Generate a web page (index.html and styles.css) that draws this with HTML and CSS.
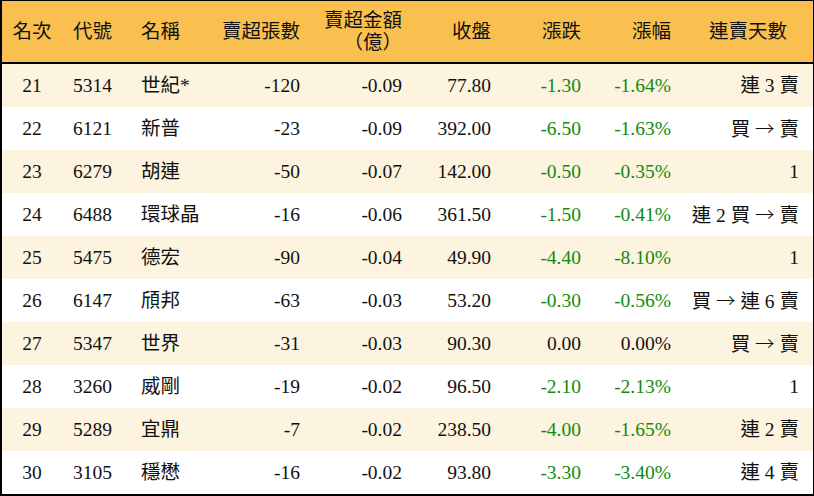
FILE: index.html
```html
<!DOCTYPE html>
<html lang="zh-Hant">
<head>
<meta charset="utf-8">
<title>賣超排行</title>
<link rel="stylesheet" href="styles.css">
</head>
<body>
<div class="frame">
<table class="rank">
<colgroup>
<col class="c1"><col class="c2"><col class="c3"><col class="c4"><col class="c5"><col class="c6"><col class="c7"><col class="c8"><col class="c9">
</colgroup>
<thead>
<tr>
<th class="ctr">名次</th>
<th class="lft">代號</th>
<th class="lft">名稱</th>
<th class="rgt">賣超張數</th>
<th class="rgt">賣超金額<br>（億）</th>
<th class="rgt">收盤</th>
<th class="rgt">漲跌</th>
<th class="rgt">漲幅</th>
<th class="rgt last">連賣天數</th>
</tr>
</thead>
<tbody>
<tr class="alt"><td class="ctr">21</td><td class="lft">5314</td><td class="lft">世紀*</td><td class="rgt">-120</td><td class="rgt">-0.09</td><td class="rgt">77.80</td><td class="rgt dn">-1.30</td><td class="rgt dn">-1.64%</td><td class="rgt last">連 3 賣</td></tr>
<tr><td class="ctr">22</td><td class="lft">6121</td><td class="lft">新普</td><td class="rgt">-23</td><td class="rgt">-0.09</td><td class="rgt">392.00</td><td class="rgt dn">-6.50</td><td class="rgt dn">-1.63%</td><td class="rgt last">買 <span class="arw">→</span> 賣</td></tr>
<tr class="alt"><td class="ctr">23</td><td class="lft">6279</td><td class="lft">胡連</td><td class="rgt">-50</td><td class="rgt">-0.07</td><td class="rgt">142.00</td><td class="rgt dn">-0.50</td><td class="rgt dn">-0.35%</td><td class="rgt last">1</td></tr>
<tr><td class="ctr">24</td><td class="lft">6488</td><td class="lft">環球晶</td><td class="rgt">-16</td><td class="rgt">-0.06</td><td class="rgt">361.50</td><td class="rgt dn">-1.50</td><td class="rgt dn">-0.41%</td><td class="rgt last">連 2 買 <span class="arw">→</span> 賣</td></tr>
<tr class="alt"><td class="ctr">25</td><td class="lft">5475</td><td class="lft">德宏</td><td class="rgt">-90</td><td class="rgt">-0.04</td><td class="rgt">49.90</td><td class="rgt dn">-4.40</td><td class="rgt dn">-8.10%</td><td class="rgt last">1</td></tr>
<tr><td class="ctr">26</td><td class="lft">6147</td><td class="lft">頎邦</td><td class="rgt">-63</td><td class="rgt">-0.03</td><td class="rgt">53.20</td><td class="rgt dn">-0.30</td><td class="rgt dn">-0.56%</td><td class="rgt last">買 <span class="arw">→</span> 連 6 賣</td></tr>
<tr class="alt"><td class="ctr">27</td><td class="lft">5347</td><td class="lft">世界</td><td class="rgt">-31</td><td class="rgt">-0.03</td><td class="rgt">90.30</td><td class="rgt">0.00</td><td class="rgt">0.00%</td><td class="rgt last">買 <span class="arw">→</span> 賣</td></tr>
<tr><td class="ctr">28</td><td class="lft">3260</td><td class="lft">威剛</td><td class="rgt">-19</td><td class="rgt">-0.02</td><td class="rgt">96.50</td><td class="rgt dn">-2.10</td><td class="rgt dn">-2.13%</td><td class="rgt last">1</td></tr>
<tr class="alt"><td class="ctr">29</td><td class="lft">5289</td><td class="lft">宜鼎</td><td class="rgt">-7</td><td class="rgt">-0.02</td><td class="rgt">238.50</td><td class="rgt dn">-4.00</td><td class="rgt dn">-1.65%</td><td class="rgt last">連 2 賣</td></tr>
<tr><td class="ctr">30</td><td class="lft">3105</td><td class="lft">穩懋</td><td class="rgt">-16</td><td class="rgt">-0.02</td><td class="rgt">93.80</td><td class="rgt dn">-3.30</td><td class="rgt dn">-3.40%</td><td class="rgt last">連 4 賣</td></tr>
</tbody>
</table>
</div>
</body>
</html>
```
FILE: styles.css
```css
html, body {
  margin: 0;
  padding: 0;
  background: #ffffff;
}
.frame {
  width: 811px;
  border-top: 1px solid #000;
  border-left: 2px solid #000;
  border-right: 1px solid #000;
  border-bottom: 2px solid #000;
}
.rank {
  width: 811px;
  border-collapse: collapse;
  table-layout: fixed;
  font-family: "Liberation Serif", "Noto Sans CJK TC", serif;
  font-size: 19.5px;
  color: #111;
}
.c1 { width: 60px; }
.c2 { width: 68px; }
.c3 { width: 80px; }
.c4 { width: 100px; }
.c5 { width: 102px; }
.c6 { width: 89px; }
.c7 { width: 90px; }
.c8 { width: 90px; }
.c9 { width: 132px; }
.rank th {
  height: 61px;
  padding: 0;
  background: #f9c04f;
  font-weight: 400;
  line-height: 22px;
  border-bottom: 2px solid #000;
  vertical-align: middle;
}
.rank td {
  height: 43px;
  padding: 0;
  line-height: 22px;
  vertical-align: middle;
  white-space: nowrap;
}
.rank tr.alt td {
  background: #fdf4df;
}
.ctr { text-align: center; }
.lft { text-align: left; padding-left: 11px !important; }
.rgt { text-align: right; padding-right: 10px !important; }
td.last { padding-right: 14px !important; }
th.last { padding-right: 26px !important; }
.dn { color: #118a11; }
.arw {
  font-family: "Noto Sans CJK TC", sans-serif;
  font-weight: 300;
}
```
